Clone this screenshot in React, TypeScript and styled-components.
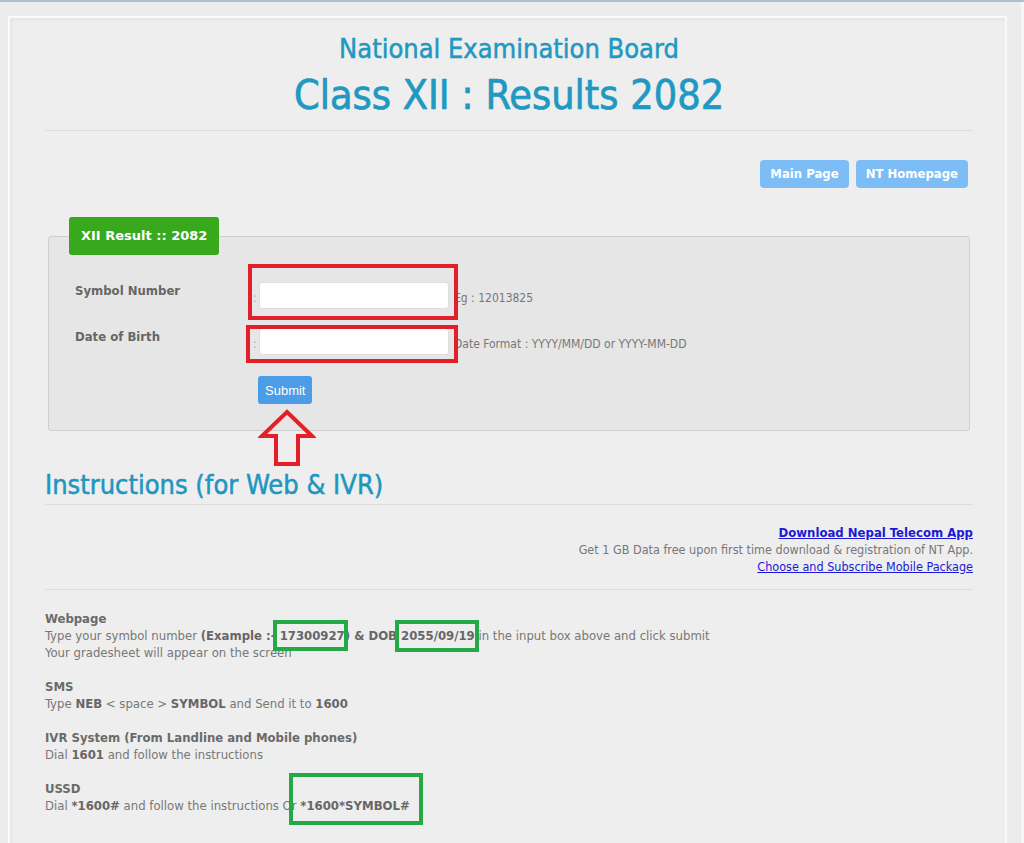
import { createGlobalStyle } from "styled-components";
import styled from "styled-components";

const GlobalStyle = createGlobalStyle`
  html, body {
    margin: 0;
    padding: 0;
    background: #ececec;
  }
  body {
    border-top: 2px solid #a8c0d6;
    font-family: "DejaVu Sans Condensed", "DejaVu Sans", sans-serif;
    font-stretch: condensed;
  }
`;

const Page = styled.div`
  display: flex;
  padding: 14px 14px 0 8px;
  min-height: calc(100vh - 2px);
  box-sizing: border-box;
  border-right: 3px solid #f6f6f6;
`;

const Container = styled.main`
  flex: 1;
  background: #eeeeee;
  border: 2px solid #fafafa;
  border-bottom: none;
  padding: 14px 32px 0 35px;
  box-shadow: inset 2px 2px 3px rgba(0, 0, 0, 0.04);
`;

const Header = styled.header`
  text-align: center;
  border-bottom: 1px solid #dcdcdc;
  padding-bottom: 10px;
`;

const Board = styled.h3`
  margin: 0;
  color: #1f98c2;
  font-size: 27px;
  font-weight: normal;
  line-height: 34px;
  -webkit-text-stroke: 0.5px #1f98c2;
`;

const Title = styled.h1`
  margin: 4px 0 0;
  color: #1f98c2;
  font-size: 41px;
  font-weight: normal;
  line-height: 50px;
  -webkit-text-stroke: 0.7px #1f98c2;
`;

const NavRow = styled.nav`
  display: flex;
  justify-content: flex-end;
  gap: 7px;
  padding: 29px 5px 0 0;
`;

const NavButton = styled.a`
  display: inline-block;
  background: #7cbdf5;
  color: #fff;
  font-weight: bold;
  font-size: 13px;
  font-stretch: normal;
  line-height: 28px;
  padding: 0 10px;
  border-radius: 4px;
`;

const Fieldset = styled.section`
  position: relative;
  margin: 48px 3px 0 3px;
  height: 193px;
  background: #e6e6e6;
  border: 1px solid #cfcfcf;
  border-radius: 3px;
  padding: 0 26px;
`;

const Legend = styled.div`
  position: absolute;
  top: -20px;
  left: 20px;
  background: #38a81c;
  color: #fff;
  font-weight: bold;
  font-size: 13px;
  font-stretch: normal;
  font-family: "DejaVu Sans", sans-serif;
  line-height: 38px;
  padding: 0 12px;
  border-radius: 3px;
`;

const FormGrid = styled.div`
  display: grid;
  grid-template-columns: 178px 6px 190px auto;
  align-items: center;
  row-gap: 19px;
  padding-top: 45px;
`;

const Label = styled.div`
  color: #666;
  font-weight: bold;
  font-size: 13px;
  align-self: start;
  margin-top: 1px;
`;

const Colon = styled.span`
  color: #aaa;
  font-size: 12px;
  margin-top: 5px;
`;

const Input = styled.input`
  box-sizing: border-box;
  width: 190px;
  height: 27px;
  border: 1px solid #ddd;
  border-radius: 3px;
  background: #fff;
`;

const Hint = styled.span`
  color: #777;
  font-size: 12px;
  margin: 5px 0 0 5px;
`;

const Submit = styled.button`
  grid-column: 3;
  justify-self: start;
  margin: 2px 0 0 -1px;
  background: #4a9de6;
  color: #fff;
  border: none;
  border-radius: 3px;
  height: 28px;
  padding: 0 7px;
  font-family: "Liberation Sans", Arial, sans-serif;
  font-size: 13px;
  font-stretch: normal;
`;

const Mark = styled.div<{ $x: number; $y: number; $w: number; $h: number; $color: string }>`
  position: absolute;
  left: ${(p) => p.$x}px;
  top: ${(p) => p.$y}px;
  width: ${(p) => p.$w}px;
  height: ${(p) => p.$h}px;
  box-sizing: border-box;
  border: 4px solid ${(p) => p.$color};
  pointer-events: none;
`;

const Arrow = styled.svg`
  position: absolute;
  left: 209px;
  top: 171px;
`;

const SectionTitle = styled.h2`
  margin: 39px 0 0;
  color: #1e96c0;
  font-size: 27px;
  font-weight: normal;
  line-height: 30px;
  padding-bottom: 4px;
  border-bottom: 1px solid #dcdcdc;
  -webkit-text-stroke: 0.5px #1e96c0;
`;

const AppBox = styled.div`
  text-align: right;
  padding: 19px 0 14px;
  border-bottom: 1px solid #dcdcdc;
  font-size: 12.5px;
  line-height: 17px;
  color: #777;
`;

const AppLink = styled.a<{ $bold?: boolean }>`
  color: #1a1ad6;
  text-decoration: underline;
  font-weight: ${(p) => (p.$bold ? "bold" : "normal")};
  font-size: ${(p) => (p.$bold ? "13px" : "12.5px")};
`;

const Steps = styled.div`
  padding-top: 20px;
  color: #777;
  font-size: 13px;
  line-height: 17px;
  font-family: "DejaVu Sans", sans-serif;
  font-stretch: condensed;
`;

const Step = styled.div`
  margin-bottom: 17px;
`;

const StepTitle = styled.div`
  color: #6a6a6a;
  font-weight: bold;
`;

const B = styled.b`
  color: #666;
`;

const Boxed = styled.span`
  position: relative;
`;

const Outline = styled.span<{ $l: number; $r: number; $t: number; $b: number }>`
  position: absolute;
  left: ${(p) => p.$l}px;
  right: ${(p) => p.$r}px;
  top: ${(p) => p.$t}px;
  bottom: ${(p) => p.$b}px;
  border: 4px solid #25a846;
`;

export default function App() {
  return (
    <>
      <GlobalStyle />
      <Page>
        <Container>
          <Header>
            <Board>National Examination Board</Board>
            <Title>Class XII : Results 2082</Title>
          </Header>

          <NavRow>
            <NavButton>Main Page</NavButton>
            <NavButton>NT Homepage</NavButton>
          </NavRow>

          <Fieldset>
            <Legend>XII Result :: 2082</Legend>
            <FormGrid>
              <Label>Symbol Number</Label>
              <Colon>:</Colon>
              <Input type="text" />
              <Hint>Eg : 12013825</Hint>

              <Label>Date of Birth</Label>
              <Colon>:</Colon>
              <Input type="text" />
              <Hint>Date Format : YYYY/MM/DD or YYYY-MM-DD</Hint>

              <Submit>Submit</Submit>
            </FormGrid>
            <Mark $x={199} $y={27} $w={210} $h={56} $color="#e0212b" />
            <Mark $x={197} $y={88} $w={212} $h={38} $color="#e0212b" />
            <Arrow width="58" height="60" viewBox="0 0 58 60">
              <path
                d="M29 4 L54 28 L40 28 L40 56 L18 56 L18 28 L4 28 Z"
                fill="none"
                stroke="#e3202a"
                strokeWidth="4"
                strokeLinejoin="miter"
              />
            </Arrow>
          </Fieldset>

          <SectionTitle>Instructions (for Web &amp; IVR)</SectionTitle>

          <AppBox>
            <AppLink $bold>Download Nepal Telecom App</AppLink>
            <br />
            Get 1 GB Data free upon first time download &amp; registration of NT App.
            <br />
            <AppLink>Choose and Subscribe Mobile Package</AppLink>
          </AppBox>

          <Steps>
            <Step>
              <StepTitle>Webpage</StepTitle>
              Type your symbol number <B>(Example :- </B>
              <Boxed>
                <B>17300927</B>
                <Outline $l={-7} $r={-3} $t={-8} $b={-8} />
              </Boxed>
              <B>) &amp; DOB </B>
              <Boxed>
                <B>2055/09/19</B>
                <Outline $l={-6} $r={-4} $t={-8} $b={-9} />
              </Boxed>{" "}
              in the input box above and click submit
              <br />
              Your gradesheet will appear on the screen
            </Step>
            <Step>
              <StepTitle>SMS</StepTitle>
              Type <B>NEB</B> &lt; space &gt; <B>SYMBOL</B> and Send it to <B>1600</B>
            </Step>
            <Step>
              <StepTitle>IVR System (From Landline and Mobile phones)</StepTitle>
              Dial <B>1601</B> and follow the instructions
            </Step>
            <Step>
              <StepTitle>USSD</StepTitle>
              Dial <B>*1600#</B> and follow the instructions Or{" "}
              <Boxed>
                <B>*1600*SYMBOL#</B>
                <Outline $l={-11} $r={-13} $t={-25} $b={-12} />
              </Boxed>
            </Step>
          </Steps>
        </Container>
      </Page>
    </>
  );
}
